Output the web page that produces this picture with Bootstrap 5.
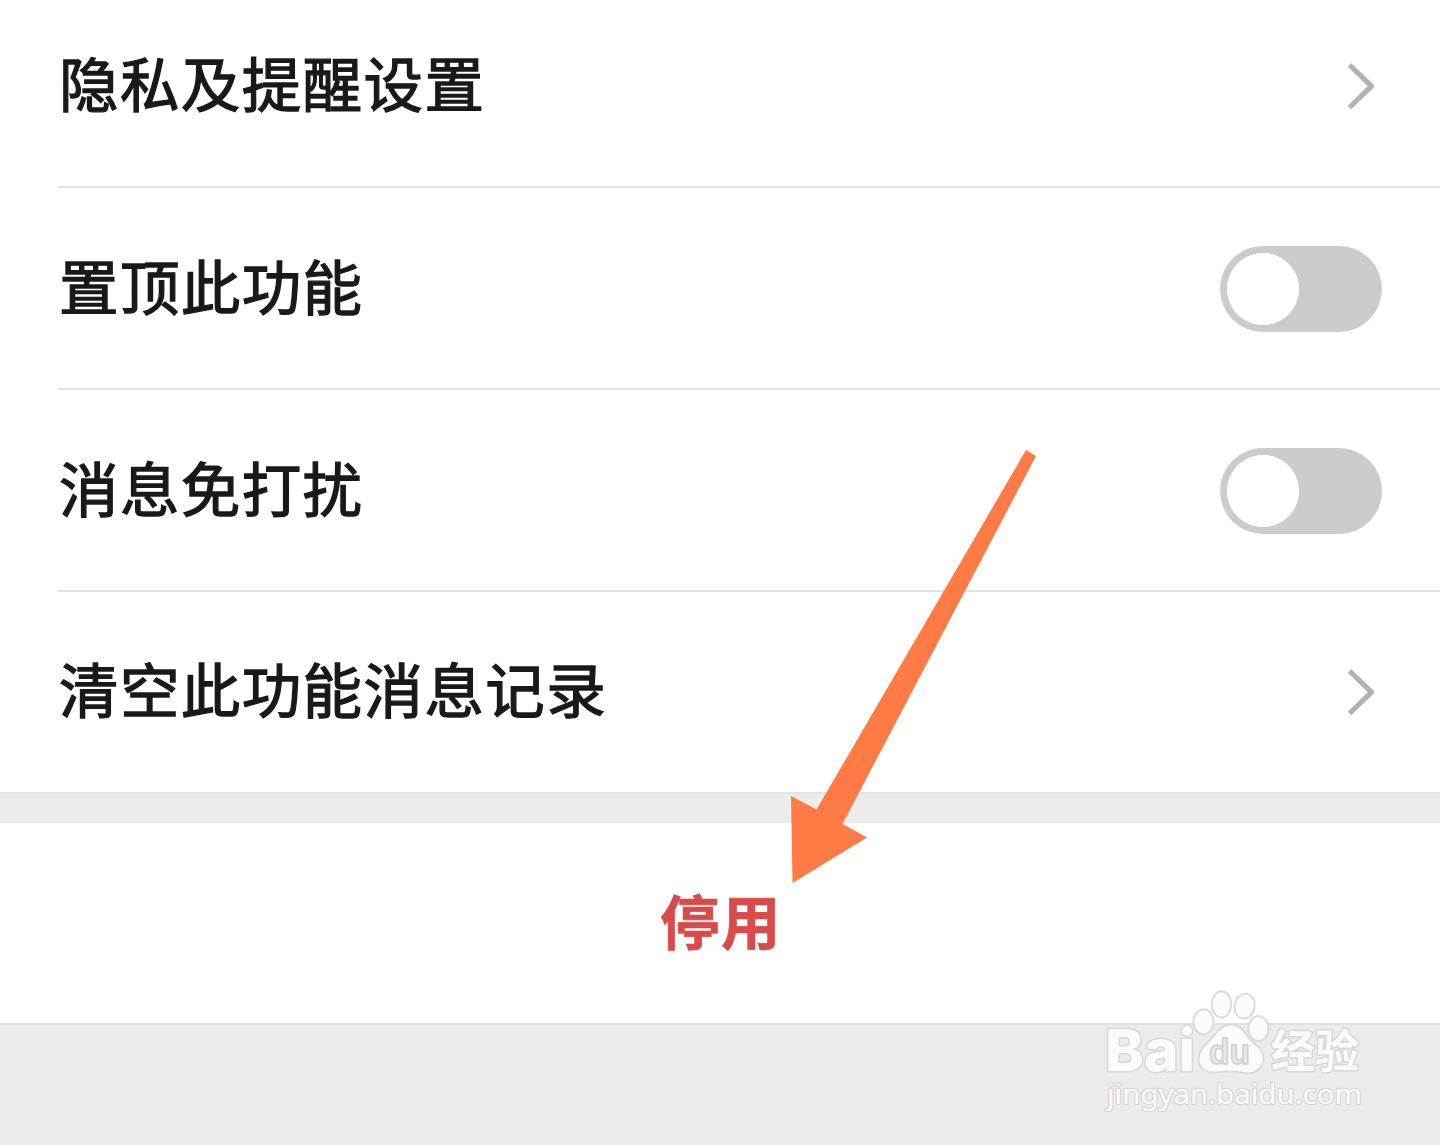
<!DOCTYPE html>
<html lang="zh-CN">
<head>
    <meta charset="UTF-8">
    <title>功能设置</title>
    <link href="https://cdn.jsdelivr.net/npm/bootstrap@5.3.3/dist/css/bootstrap.min.css" rel="stylesheet">
    <style>
        body {
            font-family: "Noto Sans CJK SC", sans-serif;
            background-color: #ececec;
            color: #191919;
            min-height: 1145px;
            overflow: hidden;
        }
        .settings-list {
            padding-left: 58px;
            border-bottom: 2px solid #e3e3e3;
        }
        .settings-list > .setting-item {
            height: 202px;
            padding: 2px 58px 0 1px;
            border: 0 solid #e3e3e3;
            border-bottom-width: 2px;
            font-size: 59.5px;
            letter-spacing: 1.4px;
            line-height: 1;
            color: #191919;
            -webkit-text-stroke: 1.3px #191919;
        }
        .settings-list > .setting-item:first-child {
            height: 188px;
            padding-top: 0;
            padding-bottom: 14px;
        }
        .settings-list > .setting-item:last-child {
            height: 200px;
            padding-top: 0;
            border-bottom-width: 0;
        }
        .setting-name {
            padding-bottom: 8px;
        }
        .arrow-icon {
            width: 40px;
            height: 60px;
        }
        .setting-item .form-check-input {
            width: 162px;
            height: 86px;
            border: 0;
            background-color: #ccc;
            background-image: radial-gradient(circle at 43px 43px, #fff 35.7px, transparent 36.3px);
            background-size: 100% 100%;
        }
        .disable-btn {
            height: 202px;
            margin-top: 29px;
            padding: 0 0 6px 2px;
            border: 0;
            border-bottom: 2px solid #e0e0e0;
            border-radius: 0;
            background-color: #fff;
            color: #d94b4b;
            font-size: 59.5px;
            letter-spacing: 1.4px;
            font-weight: 700;
            line-height: 1;
            -webkit-text-stroke: 0.6px #d94b4b;
        }
        .pointer-arrow {
            left: 780px;
            top: 440px;
            width: 270px;
            height: 450px;
        }
        .watermark {
            left: 1095px;
            top: 980px;
            width: 280px;
            height: 140px;
        }
    </style>
</head>
<body class="position-relative">

<div class="list-group list-group-flush settings-list bg-white">
    <a href="#" class="list-group-item setting-item d-flex align-items-center justify-content-between">
        <span class="setting-name">隐私及提醒设置</span>
        <svg class="arrow-icon" viewBox="0 0 40 60"><path d="M7.500 9 29.500 30.200 7.500 51.500" fill="none" stroke="#b2b2b2" stroke-width="5.2" stroke-linejoin="round"/></svg>
    </a>
    <label class="list-group-item setting-item d-flex align-items-center justify-content-between">
        <span class="setting-name">置顶此功能</span>
        <span class="form-switch d-flex p-0 m-0"><input class="form-check-input m-0" type="checkbox" role="switch"></span>
    </label>
    <label class="list-group-item setting-item d-flex align-items-center justify-content-between">
        <span class="setting-name">消息免打扰</span>
        <span class="form-switch d-flex p-0 m-0"><input class="form-check-input m-0" type="checkbox" role="switch"></span>
    </label>
    <a href="#" class="list-group-item setting-item d-flex align-items-center justify-content-between">
        <span class="setting-name">清空此功能消息记录</span>
        <svg class="arrow-icon" viewBox="0 0 40 60"><path d="M7.500 9 29.500 30.200 7.500 51.500" fill="none" stroke="#b2b2b2" stroke-width="5.2" stroke-linejoin="round"/></svg>
    </a>
</div>

<button type="button" class="btn disable-btn d-block w-100">停用</button>

<svg class="pointer-arrow position-absolute pe-none" viewBox="780 440 270 450">
    <path d="M1026 450 1036 456 842.5 824 867 837.5 792.5 883 791 796 816.5 809.5Z" fill="#ff7b45"/>
</svg>

<svg class="watermark position-absolute pe-none" viewBox="1095 980 280 140">
    <g fill="#fbfbfb" stroke="#d9d9d9" stroke-width="1.8">
        <ellipse cx="1203.5" cy="1022" rx="10" ry="12.5"/>
        <ellipse cx="1221.5" cy="1004.5" rx="9.7" ry="13"/>
        <ellipse cx="1244.5" cy="1006" rx="10" ry="12.5" transform="rotate(10 1244 1006)"/>
        <ellipse cx="1258.5" cy="1028.5" rx="10" ry="12.5"/>
        <path d="M1230 1024.5C1221 1024.5 1217 1033 1211 1039C1204 1046 1198.5 1051 1198.5 1059C1199 1069 1207 1073.5 1216 1072.5C1226 1071 1235 1071 1244 1073C1254 1074.5 1263.5 1069 1263.5 1058C1263.5 1049 1255 1045 1249 1038C1244 1031 1240 1024.5 1230 1024.5Z"/>
    </g>
    <text x="1209" y="1064" fill="#e8e8e8" stroke="#cfcfcf" stroke-width="1.6" font-family="Liberation Sans, sans-serif" font-size="35" font-weight="700" textLength="41" lengthAdjust="spacingAndGlyphs">du</text>
    <g fill="#fbfbfb" stroke="#d8d8d8" stroke-width="3" paint-order="stroke" stroke-linejoin="round">
        <text x="1105" y="1070.5" font-family="Inter, Liberation Sans, sans-serif" font-size="58" font-weight="800" textLength="90" lengthAdjust="spacingAndGlyphs">Bai</text>
        <text x="1271" y="1068" font-family="Noto Sans CJK SC, sans-serif" font-size="45" font-weight="700" textLength="88" lengthAdjust="spacingAndGlyphs">经验</text>
        <text x="1107" y="1104" stroke-width="2.4" font-family="Noto Sans, sans-serif" font-size="27" textLength="255" lengthAdjust="spacingAndGlyphs">jingyan.baidu.com</text>
    </g>
</svg>

<script src="https://cdn.jsdelivr.net/npm/bootstrap@5.3.3/dist/js/bootstrap.bundle.min.js"></script>
</body>
</html>
